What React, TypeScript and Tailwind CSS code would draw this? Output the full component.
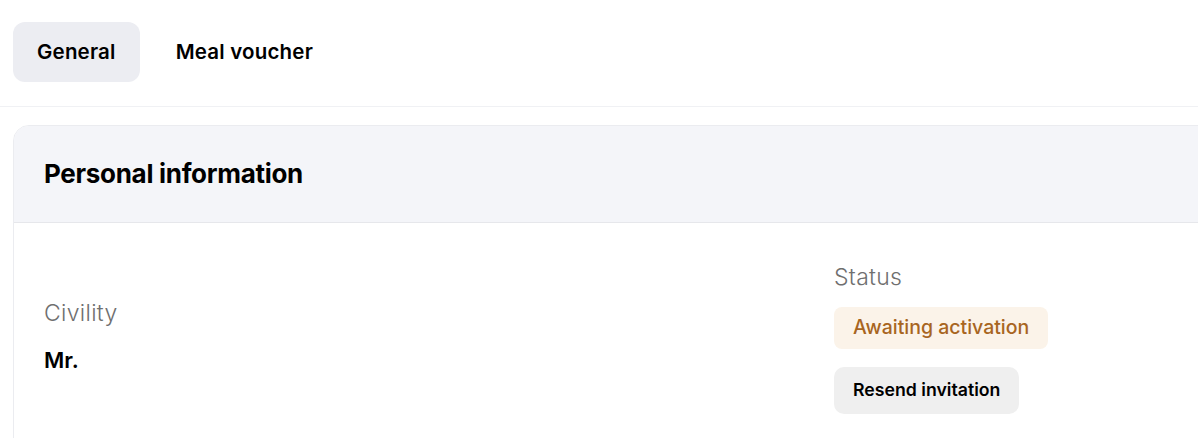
export default function App() {
  return (
    <div className="min-h-screen bg-white font-['Inter',sans-serif] text-black">
      <nav className="flex items-center gap-3 px-[13px] pt-[22px] pb-6">
        <button className="h-[60px] rounded-xl bg-[#ecedf2] px-6 text-[20.5px] leading-[24px] font-semibold tracking-[0.2px]">
          General
        </button>
        <button className="h-[60px] rounded-xl px-6 text-[20.5px] leading-[24px] font-semibold tracking-[0.2px]">
          Meal voucher
        </button>
      </nav>
      <div className="border-t border-[#f0f1f4]" />
      <section className="ml-[13px] mt-[18px] -mr-6 overflow-hidden rounded-tl-2xl border border-[#ebecf0]">
        <header className="flex h-[97px] items-center border-b border-[#e6e7eb] bg-[#f4f5f9] px-[30px]">
          <h2 className="text-[26px] leading-[32px] font-bold tracking-[-0.3px]">Personal information</h2>
        </header>
        <div className="flex items-start px-[30px] pt-[40px] pb-6">
          <div className="w-[790px] pt-[36px]">
            <p className="text-[23px] leading-[28px] font-light tracking-[0.3px] text-[#6f6f6f]">Civility</p>
            <p className="mt-[19px] text-[22px] leading-[28px] font-semibold">Mr.</p>
          </div>
          <div className="flex flex-col items-start">
            <p className="text-[23px] leading-[28px] font-light tracking-[0.3px] text-[#6f6f6f]">Status</p>
            <span className="mt-[16px] flex h-[42px] items-center rounded-lg bg-[#fbf3e9] px-[19px] text-[19.5px] font-medium text-[#a8651f]">
              Awaiting activation
            </span>
            <button className="mt-[18px] h-[47px] rounded-[10px] bg-[#efefef] px-[19px] text-[17.7px] font-semibold">
              Resend invitation
            </button>
          </div>
        </div>
      </section>
    </div>
  );
}
